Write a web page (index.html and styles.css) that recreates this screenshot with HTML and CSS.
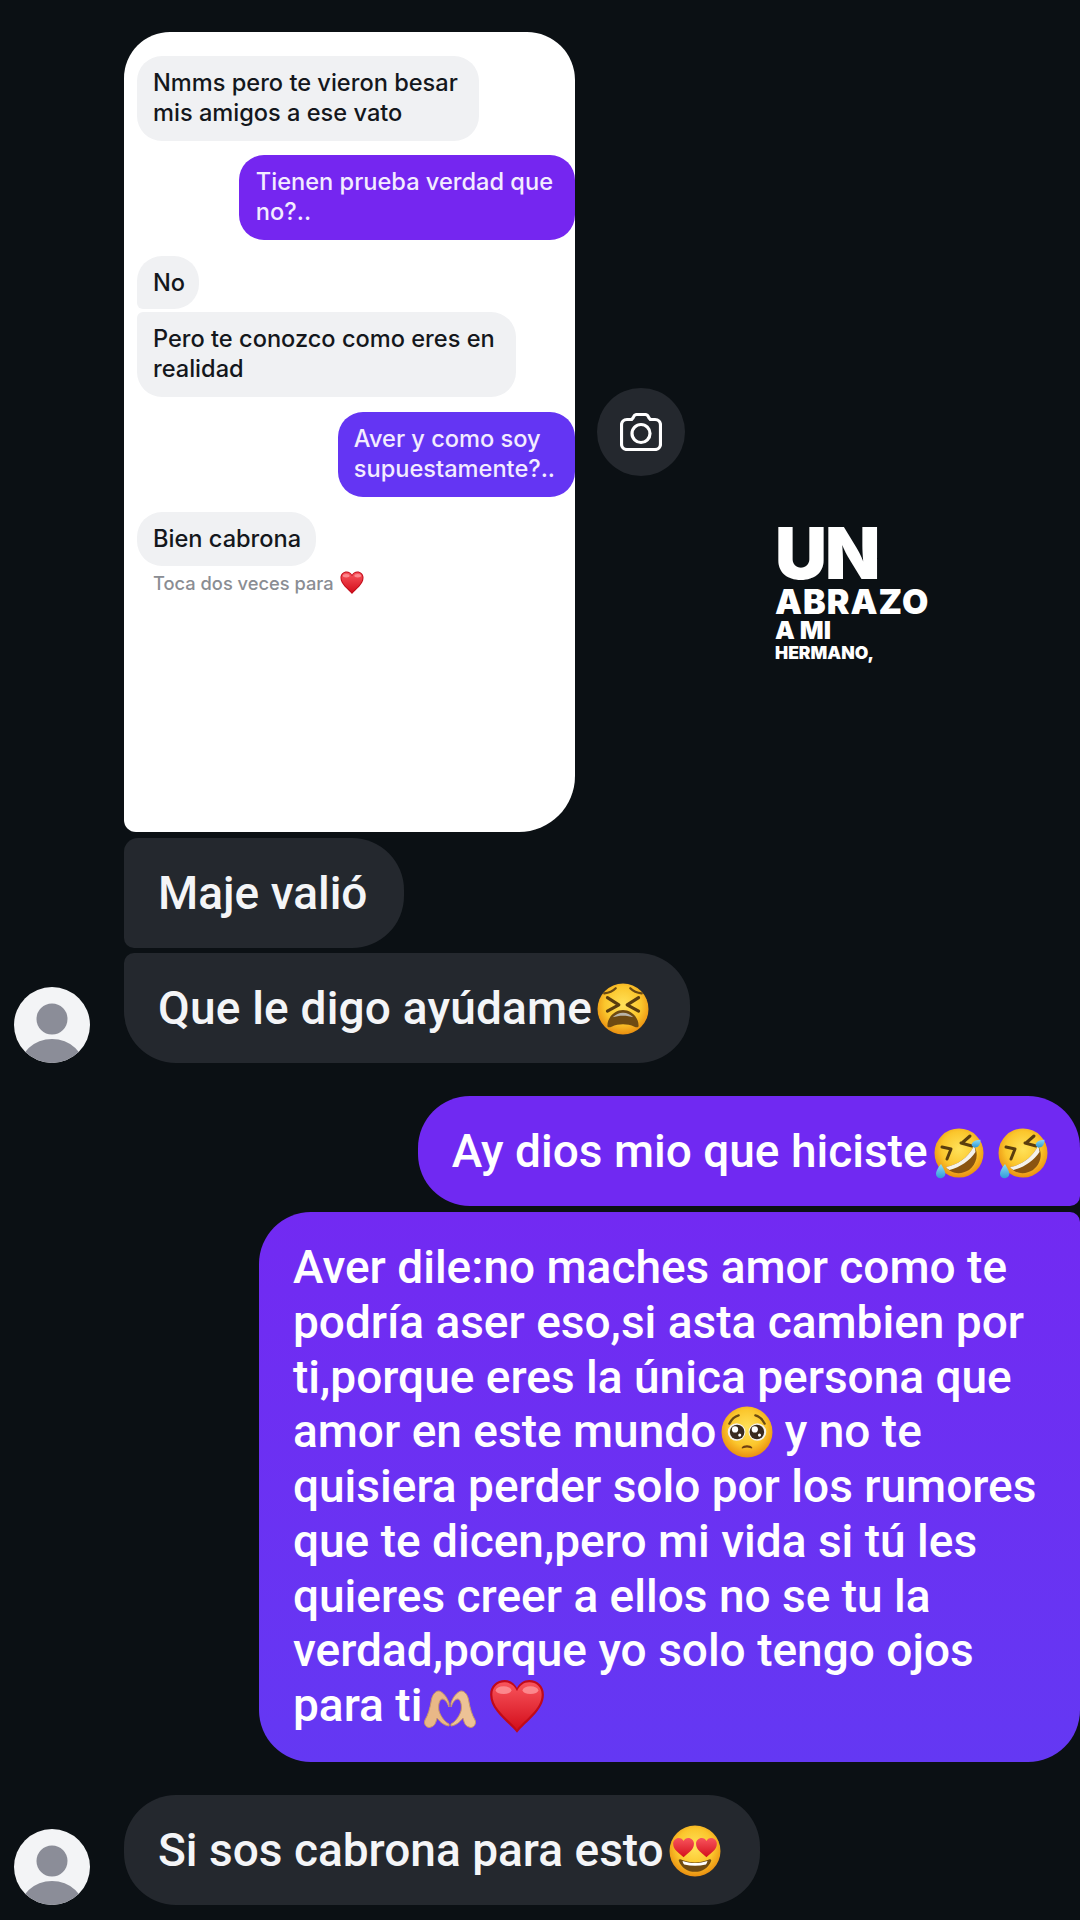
FILE: index.html
```html
<!DOCTYPE html>
<html lang="es">
<head>
  <meta charset="UTF-8" />
  <meta name="viewport" content="width=device-width, initial-scale=1.0"/>
  <title>Chat</title>
  <link rel="stylesheet" href="styles.css">
</head>
<body>

  <svg class="sprites" aria-hidden="true">
    <defs>
      <radialGradient id="skin" cx="50%" cy="42%" r="58%">
        <stop offset="0%" stop-color="#ffe25a"/>
        <stop offset="62%" stop-color="#fbc62c"/>
        <stop offset="100%" stop-color="#ea8f10"/>
      </radialGradient>
      <linearGradient id="red" x1="0" y1="0" x2="0" y2="1">
        <stop offset="0%" stop-color="#f8545c"/>
        <stop offset="100%" stop-color="#d40f1c"/>
      </linearGradient>
      <linearGradient id="tear" x1="0" y1="0" x2="0" y2="1">
        <stop offset="0%" stop-color="#8fdcf5"/>
        <stop offset="100%" stop-color="#2f9ad8"/>
      </linearGradient>

      <symbol id="heart" viewBox="0 0 50 50">
        <path d="M25 48C17 38 1 28 1 14 1 6 7 1 14 1c5 0 9 3 11 7 2-4 6-7 11-7 7 0 13 5 13 13 0 14-16 24-24 34z" fill="#c10a18"/>
        <path d="M25 45C18 36 3 27 3 14 3 7 8 3 14 3c5 0 9 3 11 8 2-5 6-8 11-8 6 0 11 4 11 11 0 13-15 22-22 31z" fill="url(#red)"/>
        <ellipse cx="13" cy="10" rx="7" ry="3.5" fill="#ff9ea2" opacity=".75"/>
        <ellipse cx="37" cy="10" rx="7" ry="3.5" fill="#ff9ea2" opacity=".75"/>
      </symbol>

      <symbol id="tired" viewBox="0 0 50 50">
        <circle cx="25" cy="25" r="24.5" fill="url(#skin)"/>
        <path d="M7 10c4-.5 8-2 11-5M43 10c-4-.5-8-2-11-5" fill="none" stroke="#6b4a12" stroke-width="2.2" stroke-linecap="round"/>
        <path d="M10 14l11 7-11 6M40 14l-11 7 11 6" fill="none" stroke="#5a3d0e" stroke-width="3" stroke-linecap="round" stroke-linejoin="round"/>
        <path d="M10 41c0-8 7-15 15-15s15 7 15 15c0 2-2 2-4 1-7-3-15-3-22 0-2 1-4 1-4-1z" fill="#6e4a12"/>
        <path d="M15 33c3-3 6-4.500 10-4.500s7 1.500 10 4.500c-6-2-14-2-20 0z" fill="#b9b4a8"/>
      </symbol>

      <symbol id="rofl" viewBox="0 0 54 54">
        <circle cx="27" cy="27" r="24.500" fill="url(#skin)"/>
        <path d="M30 17l8-7M29 17l11 3" fill="none" stroke="#5a3d0e" stroke-width="3" stroke-linecap="round"/>
        <path d="M10 21l9 2-4 10" fill="none" stroke="#5a3d0e" stroke-width="3" stroke-linecap="round" stroke-linejoin="round"/>
        <path d="M14 41c11-2 22-9 28-21 5 7 3 18-5 24-8 5-18 4-23-3z" fill="#8a5410"/>
        <path d="M14 41c11-2 22-9 28-21 1 2 1.500 4 1.500 6-6 9-15 15-26 18-1.500-.8-2.700-1.800-3.500-3z" fill="#f4f2ec"/>
        <path d="M47 14c-2-.5-6 1-7 3.500-1 2 1 4 3.500 4 3 0 5-3 5-7.500 0-.5-.8-.5-1.500 0z" fill="url(#tear)"/>
        <path d="M9 38c-2 2-5 7-5 10 0 3 3 5 6 4 3-1 4-3.500 3-6-.8-2.500-2.500-5.500-4-8z" fill="url(#tear)"/>
      </symbol>

      <symbol id="pleading" viewBox="0 0 50 50">
        <circle cx="25" cy="25" r="24.500" fill="url(#skin)"/>
        <path d="M8 17c2-4 5-7 9-8M42 17c-2-4-5-7-9-8" fill="none" stroke="#6b4a12" stroke-width="2.200" stroke-linecap="round"/>
        <circle cx="15" cy="25" r="8.500" fill="#f6f3ea"/>
        <circle cx="35" cy="25" r="8.500" fill="#f6f3ea"/>
        <circle cx="15.500" cy="25" r="7" fill="#3a2a1e"/>
        <circle cx="34.500" cy="25" r="7" fill="#3a2a1e"/>
        <circle cx="13.500" cy="22.500" r="3" fill="#fff"/>
        <circle cx="32.500" cy="22.500" r="3" fill="#fff"/>
        <circle cx="18" cy="28" r="1.500" fill="#fff"/>
        <circle cx="37" cy="28" r="1.500" fill="#fff"/>
        <path d="M20 40c1.500-3 8.500-3 10 0 .5 1-1 1-2 .5-2-.8-4-.8-6 0-1 .5-2.500.5-2-.5z" fill="#6e3f12"/>
      </symbol>

      <symbol id="hands" viewBox="0 0 54 50">
        <path d="M26 21c-2-6-6-11-10-12-4 0-7 4-8 11-1 6-3 13-6 18-2 4 2 9 6 7 4-1 5-5 6-9 2 2 5 7 12 8V42c-4-2-8-7-10-13-1-5 0-11 3-12 3 0 5 3 7 8z" fill="#e9b887" stroke="#c99766" stroke-width="1"/>
        <path d="M28 21c2-6 6-11 10-12 4 0 7 4 8 11 1 6 3 13 6 18 2 4-2 9-6 7-4-1-5-5-6-9-2 2-5 7-12 8V42c4-2 8-7 10-13 1-5 0-11-3-12-3 0-5 3-7 8z" fill="#edc296" stroke="#c99766" stroke-width="1"/>
      </symbol>

      <symbol id="hearteyes" viewBox="0 0 50 50">
        <circle cx="25" cy="25" r="24.500" fill="url(#skin)"/>
        <path d="M14 31C10 27 4 24 4 18c0-3 2.500-5.500 5.500-5.500 2 0 3.500 1 4.500 3 1-2 2.500-3 4.500-3 3 0 5.500 2.500 5.500 5.500 0 6-6 9-10 13z" fill="url(#red)"/>
        <path d="M36 31c-4-4-10-7-10-13 0-3 2.500-5.500 5.500-5.500 2 0 3.500 1 4.500 3 1-2 2.500-3 4.500-3 3 0 5.500 2.500 5.500 5.500 0 6-6 9-10 13z" fill="url(#red)"/>
        <path d="M11 33c4 2 9 3 14 3s10-1 14-3c1-.5 2 .5 1.500 1.500C38 41 32 45 25 45s-13-4-15.500-10.500C9 33.500 10 32.500 11 33z" fill="#6e4a12"/>
        <path d="M13 34.500c3.500 1.200 8 2 12 2s8.500-.8 12-2c-.3 1.500-.8 2.500-1.500 3.500-7 1.500-14 1.500-21 0-.7-1-1.200-2-1.500-3.500z" fill="#fff"/>
      </symbol>
    </defs>
  </svg>

  <div class="page">

    <div class="shared-row">
      <div class="shared-card">
        <div class="sb sb-in">Nmms pero te vieron besar<br>mis amigos a ese vato</div>
        <div class="sb sb-out sb-first">Tienen prueba verdad que<br>no?..</div>
        <div class="sb sb-in sb-no">No</div>
        <div class="sb sb-in sb-next">Pero te conozco como eres en<br>realidad</div>
        <div class="sb sb-out sb-second">Aver y como soy<br>supuestamente?..</div>
        <div class="sb sb-in sb-last">Bien cabrona</div>
        <div class="sb-hint">Toca dos veces para <svg class="emoji-hint"><use href="#heart"/></svg></div>
      </div>
      <button class="cam-btn" aria-label="Cámara">
        <svg width="42" height="38" viewBox="0 0 42 38" fill="none" stroke="#fff" stroke-width="3.200">
          <path d="M7 6.500h3.500c1.200 0 2-.6 2.600-1.800l.4-.8C14.200 2.400 15.200 1.500 17 1.500h8c1.800 0 2.800.9 3.500 2.400l.4.800c.6 1.200 1.400 1.800 2.600 1.800H35c3.300 0 5.500 2.200 5.500 5.500V31c0 3.300-2.200 5.500-5.500 5.500H7c-3.300 0-5.500-2.200-5.500-5.500V12c0-3.300 2.200-5.500 5.500-5.500z"/>
          <circle cx="21" cy="20.500" r="9"/>
        </svg>
      </button>
    </div>

    <div class="sticker">
      <span class="st-un">UN</span>
      <span class="st-abrazo">ABRAZO</span>
      <span class="st-ami">A MI</span>
      <span class="st-hermano">HERMANO,</span>
    </div>

    <div class="row row-plain">
      <div class="bubble bubble-in bubble-plain">Maje valió</div>
    </div>
    <div class="row row-avatar row-tight">
      <svg class="avatar"><use href="#avatar-icon"/></svg>
      <div class="bubble bubble-in bubble-group-end">Que le digo ayúdame<svg class="emoji"><use href="#tired"/></svg></div>
    </div>

    <div class="row row-out row-gap">
      <div class="bubble bubble-out bubble-short">Ay dios mio que hiciste<svg class="emoji emoji-rofl"><use href="#rofl"/></svg> <svg class="emoji emoji-rofl"><use href="#rofl"/></svg></div>
    </div>
    <div class="row row-out row-tighter">
      <div class="bubble bubble-out bubble-long">Aver dile:no maches amor como te<br>podría aser eso,si asta cambien por<br>ti,porque eres la única persona que<br>amor en este mundo<svg class="emoji"><use href="#pleading"/></svg> y no te<br>quisiera perder solo por los rumores<br>que te dicen,pero mi vida si tú les<br>quieres creer a ellos no se tu la<br>verdad,porque yo solo tengo ojos<br>para ti<svg class="emoji emoji-hands"><use href="#hands"/></svg> <svg class="emoji emoji-heart"><use href="#heart"/></svg></div>
    </div>

    <div class="row row-avatar row-gap">
      <svg class="avatar"><use href="#avatar-icon"/></svg>
      <div class="bubble bubble-in bubble-last">Si sos cabrona para esto<svg class="emoji"><use href="#hearteyes"/></svg></div>
    </div>

  </div>

  <svg class="sprites" aria-hidden="true">
    <defs>
      <clipPath id="avatar-clip"><circle cx="38" cy="38" r="38"/></clipPath>
      <symbol id="avatar-icon" viewBox="0 0 76 76">
        <circle cx="38" cy="38" r="38" fill="#f3f4f6"/>
        <circle cx="38" cy="32" r="15.500" fill="#8b8d98"/>
        <ellipse cx="38" cy="83" rx="33" ry="31" fill="#8b8d98" clip-path="url(#avatar-clip)"/>
      </symbol>
    </defs>
  </svg>

</body>
</html>
```

FILE: styles.css
```css
* {
  box-sizing: border-box;
}

body {
  margin: 0;
  background-color: #0b1014;
  font-family: Roboto, "Liberation Sans", sans-serif;
}

.sprites {
  position: absolute;
  width: 0;
  height: 0;
}

.page {
  position: relative;
  width: 1080px;
  height: 1920px;
  padding-top: 32px;
  overflow: hidden;
  background-color: #0b1014;
}

/* shared post at the top */
.shared-row {
  display: flex;
  align-items: center;
  gap: 22px;
  padding-left: 124px;
}

.shared-card {
  display: flex;
  flex-direction: column;
  align-items: flex-start;
  width: 451px;
  height: 800px;
  padding: 24px 0 0 13px;
  background-color: #fff;
  border-radius: 46px 48px 56px 12px;
  font-family: Inter, "Liberation Sans", sans-serif;
  font-size: 23.6px;
  font-weight: 500;
  line-height: 30px;
}

.sb {
  padding: 12px 21px 13px 16px;
  border-radius: 25px;
  background-color: #f0f1f3;
  color: #14171c;
}

.sb-out {
  align-self: flex-end;
  color: #f3ecff;
  padding-left: 17px;
  padding-right: 22px;
}

.sb-first {
  margin-top: 14px;
  background-color: #7526f0;
}

.sb-second {
  margin-top: 15px;
  padding-left: 16px;
  padding-right: 20px;
  background-color: #6435f3;
}

.sb-no {
  margin-top: 16px;
  padding-bottom: 11px;
  padding-right: 14px;
  border-bottom-left-radius: 6px;
}

.sb-next {
  margin-top: 3px;
  border-top-left-radius: 6px;
}

.sb-last {
  margin-top: 15px;
  padding-bottom: 12px;
  padding-right: 15px;
}

.sb-hint {
  display: flex;
  align-items: center;
  gap: 6px;
  margin: 5px 0 0 16px;
  color: #8a8d93;
  font-size: 18.300px;
  line-height: 24px;
}

.emoji-hint {
  width: 24px;
  height: 24px;
}

.cam-btn {
  display: flex;
  align-items: center;
  justify-content: center;
  width: 88px;
  height: 88px;
  padding: 0;
  border: none;
  border-radius: 50%;
  background-color: #24282e;
}

/* text sticker on the dark background */
.sticker {
  position: absolute;
  left: 775px;
  top: 520px;
  display: flex;
  flex-direction: column;
  color: #fff;
  font-family: Inter, "Liberation Sans", sans-serif;
  font-weight: 900;
}

.st-un {
  font-size: 72px;
  line-height: 66px;
  letter-spacing: -2px;
}

.st-abrazo {
  font-size: 34px;
  line-height: 32px;
  letter-spacing: 1px;
}

.st-ami {
  font-size: 25px;
  line-height: 25px;
}

.st-hermano {
  font-size: 17.500px;
  line-height: 20px;
}

/* message rows */
.row {
  display: flex;
}

.row-plain {
  margin-top: 6px;
  padding-left: 124px;
}

.row-avatar {
  align-items: flex-end;
  gap: 34px;
  padding-left: 14px;
}

.row-out {
  justify-content: flex-end;
}

.row-tight {
  margin-top: 5px;
}

.row-tighter {
  margin-top: 6px;
}

.row-gap {
  margin-top: 33px;
}

.avatar {
  width: 76px;
  height: 76px;
  flex-shrink: 0;
}

.bubble {
  padding: 27px 38px 27px 34px;
  border-radius: 52px;
  color: #f4f5f7;
  font-size: 46px;
  font-weight: 500;
  line-height: 56px;
}

.bubble-in {
  padding-right: 41px;
  background-color: #24282e;
}

.bubble-plain {
  padding-right: 37px;
  border-top-left-radius: 14px;
  border-bottom-left-radius: 10px;
}

.bubble-group-end {
  letter-spacing: 0.2px;
  border-top-left-radius: 10px;
}

.bubble-last {
  padding-right: 39px;
}

.bubble-out {
  color: #fff;
}

.bubble-short {
  height: 110px;
  background-color: #7029f2;
  padding-right: 30px;
  border-bottom-right-radius: 10px;
}

.bubble-long {
  width: 821px;
  height: 550px;
  padding-top: 28px;
  padding-bottom: 0;
  line-height: 54.750px;
  background: linear-gradient(180deg, #722af2, #6438f3);
  border-top-right-radius: 10px;
}

.emoji {
  display: inline-block;
  width: 52px;
  height: 52px;
  margin-left: 5px;
  vertical-align: -11px;
}

.emoji-rofl {
  width: 54px;
  height: 54px;
  margin-left: 4px;
  vertical-align: -13px;
}

.emoji-rofl + .emoji-rofl {
  margin-left: -1px;
}

.emoji-hands {
  width: 54px;
  height: 50px;
  margin-left: 1px;
}

.emoji-heart {
  width: 56px;
  height: 56px;
  margin: -24px 0 0;
  vertical-align: -14px;
}
```
